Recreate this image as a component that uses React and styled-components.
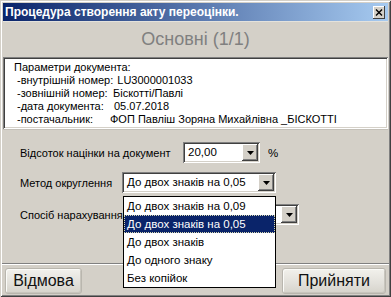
import React from 'react'
import styled, { createGlobalStyle } from 'styled-components'

const Global = createGlobalStyle`
  body {
    margin: 0;
    background: #d4d0c8;
  }
  * {
    box-sizing: border-box;
  }
`

const Window = styled.div`
  width: 391px;
  height: 297px;
  padding: 3px;
  display: flex;
  flex-direction: column;
  background: #d4d0c8;
  font-family: "Liberation Sans", Arial, sans-serif;
  font-size: 11px;
  color: #000;
  box-shadow: inset 1px 1px #d4d0c8, inset -1px -1px #404040,
    inset 2px 2px #fff, inset -2px -2px #808080;
`

const TitleBar = styled.div`
  height: 18px;
  display: flex;
  align-items: center;
  padding: 0 3px 0 2px;
  background: linear-gradient(to right, #0a246a, #a6caf0);
  color: #fff;
  font-weight: bold;
  font-size: 12px;
`

const CloseBtn = styled.div`
  margin-left: auto;
  width: 12px;
  height: 13px;
  display: flex;
  align-items: center;
  justify-content: center;
  background: #d4d0c8;
  box-shadow: inset -1px -1px #404040, inset 1px 1px #fff;
`

const Heading = styled.div`
  height: 36px;
  display: flex;
  align-items: center;
  justify-content: center;
  font-size: 18px;
  color: #808080;
  border-top: 1px solid #e4e2dc;
`

const ParamsBox = styled.div`
  height: 72px;
  padding: 4px 6px 0 11px;
  background: #fff;
  line-height: 13px;
  font-size: 11px;
  box-shadow: inset 1px 1px #808080, inset -1px -1px #fff,
    inset 2px 2px #404040, inset -2px -2px #d4d0c8;
`

const ParamLine = styled.div`
  display: flex;
  padding-left: 3px;
  white-space: nowrap;
`

const ParamKey = styled.span`
  min-width: ${p => p.$w}px;
  padding-right: 4px;
  flex: none;
`

const Form = styled.div`
  flex: 1;
  display: flex;
  flex-direction: column;
  padding-left: 17px;
  border-top: 1px solid #c4c0b8;
`

const Row = styled.div`
  display: flex;
  align-items: center;
  margin-top: ${p => p.$top}px;
`

const Label = styled.span`
  width: ${p => p.$w}px;
  flex: none;
  white-space: nowrap;
  font-size: 11px;
`

const ComboWrap = styled.div`
  position: relative;
  width: ${p => p.$w}px;
  height: 21px;
`

const Combo = styled.div`
  height: 100%;
  display: flex;
  align-items: stretch;
  padding: 2px;
  background: #fff;
  box-shadow: inset 1px 1px #808080, inset -1px -1px #fff,
    inset 2px 2px #404040, inset -2px -2px #d4d0c8;
`

const ComboValue = styled.span`
  flex: 1;
  padding-left: 3px;
  line-height: 16px;
  font-size: 11.5px;
  white-space: nowrap;
  overflow: hidden;
`

const ArrowBtn = styled.div`
  width: 16px;
  display: flex;
  align-items: center;
  justify-content: center;
  background: #d4d0c8;
  box-shadow: inset -1px -1px #404040, inset 1px 1px #fff,
    inset -2px -2px #808080;
`

const Unit = styled.span`
  margin-left: 8px;
  font-size: 11.5px;
`

const DropList = styled.div`
  position: absolute;
  left: 1px;
  right: 0;
  top: calc(100% + 3px);
  background: #fff;
  border: 1px solid #000;
  z-index: 2;
`

const Item = styled.div`
  height: 18px;
  line-height: 18px;
  padding-left: 3px;
  font-size: 11.5px;
  white-space: nowrap;
  background: ${p => (p.$selected ? '#0a246a' : 'transparent')};
  color: ${p => (p.$selected ? '#fff' : '#000')};
  outline: ${p => (p.$selected ? '1px dotted #d8d8b0' : 'none')};
  outline-offset: -1px;
`

const Separator = styled.div`
  height: 2px;
  margin: 0 -1px;
  border-top: 1px solid #808080;
  border-bottom: 1px solid #fff;
`

const ButtonRow = styled.div`
  display: flex;
  justify-content: space-between;
  padding: 3px 2px 0 2px;
`

const Button = styled.div`
  width: ${p => p.$w}px;
  height: 26px;
  display: flex;
  align-items: center;
  justify-content: center;
  font-size: 16px;
  color: #111;
  border: 1px solid #b9b6ae;
  border-radius: 3px;
  background: linear-gradient(#f2f1ec, #e2e0da 60%, #d6d3cb);
  box-shadow: inset 1px 1px #fbfbf8, inset -1px -1px #c8c5bd;
`

function Arrow() {
  return (
    <svg width="7" height="4" viewBox="0 0 7 4">
      <path d="M0 0h7L3.5 4z" fill="#000" />
    </svg>
  )
}

function Select({ width, value, children }) {
  return (
    <ComboWrap $w={width}>
      <Combo>
        <ComboValue>{value}</ComboValue>
        <ArrowBtn><Arrow /></ArrowBtn>
      </Combo>
      {children}
    </ComboWrap>
  )
}

const params = [
  ['-внутрішній номер:', 'LU3000001033', 97],
  ['-зовнішній номер:', 'Біскотті/Павлі', 96],
  ['-дата документа:', '05.07.2018', 97],
  ['-постачальник:', 'ФОП Павліш Зоряна Михайлівна _БІСКОТТІ', 93],
]

const options = [
  'До двох знаків на 0,09',
  'До двох знаків на 0,05',
  'До двох знаків',
  'До одного знаку',
  'Без копійок',
]

export default function App() {
  return (
    <Window>
      <Global />
      <TitleBar>
        Процедура створення акту переоцінки.
        <CloseBtn>
          <svg width="8" height="7" viewBox="0 0 8 7">
            <path d="M1 0.5l6 6M7 0.5l-6 6" stroke="#000" strokeWidth="1.4" />
          </svg>
        </CloseBtn>
      </TitleBar>
      <Heading>Основні (1/1)</Heading>
      <ParamsBox>
        <div>Параметри документа:</div>
        {params.map(([k, v, w]) => (
          <ParamLine key={k}>
            <ParamKey $w={w}>{k}</ParamKey>
            <span>{v}</span>
          </ParamLine>
        ))}
      </ParamsBox>
      <Form>
        <Row $top={12}>
          <Label $w={163}>Відсоток націнки на документ</Label>
          <Select width={77} value="20,00" />
          <Unit>%</Unit>
        </Row>
        <Row $top={9}>
          <Label $w={102}>Метод округлення</Label>
          <Select width={154} value="До двох знаків на 0,05">
            <DropList>
              {options.map((o, i) => (
                <Item key={o} $selected={i === 1}>{o}</Item>
              ))}
            </DropList>
          </Select>
        </Row>
        <Row $top={11}>
          <Label $w={103}>Спосіб нарахування</Label>
          <Select width={176} value="" />
        </Row>
      </Form>
      <Separator />
      <ButtonRow>
        <Button $w={77}>Відмова</Button>
        <Button $w={104}>Прийняти</Button>
      </ButtonRow>
    </Window>
  )
}
